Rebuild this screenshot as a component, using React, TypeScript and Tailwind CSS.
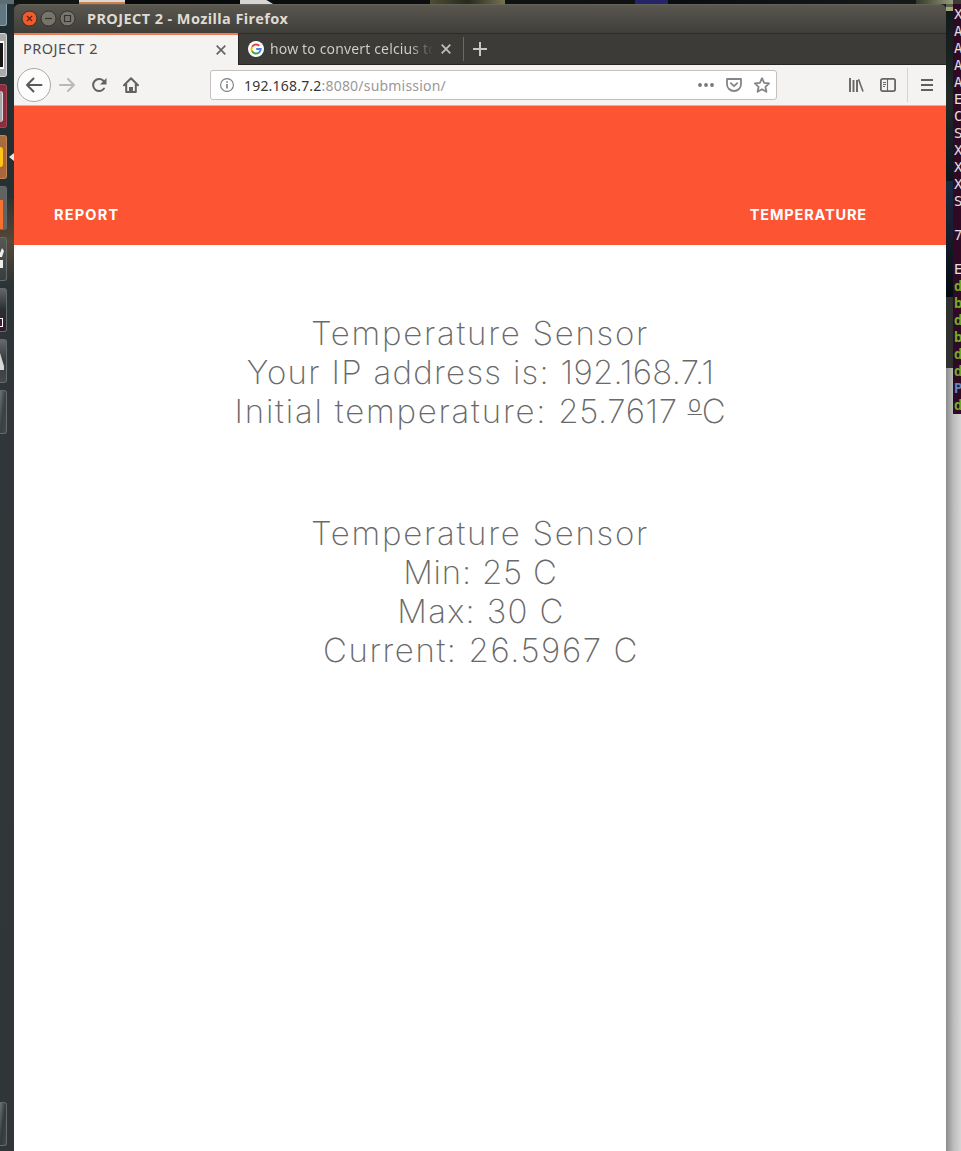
import type { ReactNode } from "react";

const ui = "font-['Noto_Sans','Open_Sans',sans-serif]";

function Wallpaper() {
  return (
    <div className="flex h-1 w-full shrink-0 bg-[#0d0e0f]">
      <div className="w-[14px] bg-[#5d6b73]" />
      <div className="w-[65px] bg-[#111514]" />
      <div className="w-[46px] border-b-2 border-[#d08050] bg-[#ddd8d2]" />
      <div className="w-[115px] bg-[#08090a]" />
      <div className="w-[33px] bg-[#d6d6d4] [clip-path:polygon(0_0,80%_0,100%_100%,0_100%)]" />
      <div className="w-[157px] bg-[#0c0d0e]" />
      <div className="w-[75px] bg-linear-to-r from-[#4d4e32] via-[#272b1e] to-[#76734d]" />
      <div className="w-[85px] bg-[#101112]" />
      <div className="w-[45px] bg-[#101012]" />
      <div className="w-[33px] bg-[#242469]" />
      <div className="w-[248px] bg-linear-to-r from-[#0b0c10] to-[#16191a]" />
      <div className="w-[37px] bg-linear-to-r from-[#34392b] to-[#969b78]" />
      <div className="flex-1 bg-[#3c3b37]" />
    </div>
  );
}

function Tile({ className = "", children }: { className?: string; children?: ReactNode }) {
  return (
    <div
      className={`flex h-11 w-[7px] shrink-0 items-center overflow-hidden rounded-r-[3px] border-y border-r border-[#64696b] ${className}`}
    >
      {children}
    </div>
  );
}

function Dock() {
  return (
    <div className="relative flex w-[14px] shrink-0 flex-col gap-[7px] bg-linear-to-b from-[#1f2c2e] via-[#303639] via-35% to-[#303538]">
      <div className="absolute top-[194px] left-0 h-[88px] w-[14px] bg-linear-to-b from-[#40352b]/30 via-[#6b5037]/70 to-transparent" />
      <div className="h-[22px] w-[7px] shrink-0 rounded-br-[3px] border-r border-b border-[#8fa0a8] bg-[#607681]" />
      <Tile className="relative border-[#d7d7d7] bg-[#aaa]">
        <div className="h-7 w-1 border-y-2 border-r border-white bg-[#171717]" />
      </Tile>
      <Tile className="relative border-[#a64758] bg-[#8b2c40]">
        <div className="h-[31px] w-[3px] rounded-r-sm border-r border-[#ddd] bg-[#a6a6a6]" />
      </Tile>
      <Tile className="relative border-[#c78453] bg-linear-to-b from-[#a96c3d] to-[#a8653f]">
        <div className="h-5 w-[3px] rounded-r-full bg-[#ffc313]" />
      </Tile>
      <Tile className="relative bg-[#626361]">
        <div className="mt-3 h-[29px] w-[3px] bg-[#f67032]" />
      </Tile>
      <Tile className="relative bg-linear-to-b from-[#575854] to-[#383c3d]">
        <svg width="4" height="26" viewBox="0 0 4 26"><path d="M0 7 2 2l2 3-2 6H0ZM0 14h3v8H0Z" fill="#eee" /></svg>
      </Tile>
      <Tile className="relative bg-linear-to-b from-[#62676a] via-[#292e31] to-[#35192b]">
        <div className="mt-6 h-[9px] w-[3px] border border-l-0 border-white bg-[#411c34]" />
      </Tile>
      <Tile className="relative bg-linear-to-b from-[#66696b] via-[#353a3d] to-[#454a4c]">
        <svg width="5" height="26" viewBox="0 0 5 26"><path d="M0 5 4 18v4H0Z" fill="#d7d7d7" /></svg>
      </Tile>
      <Tile className="relative bg-linear-to-br from-[#6f7577] via-[#3b4042] to-[#43494b]" />
      <div className="flex-1" />
      <Tile className="mb-[5px] bg-linear-to-br from-[#6f7577] via-[#34393b] to-[#43494b]" />
      <svg className="absolute top-[149px] left-[9px]" width="5" height="8" viewBox="0 0 5 8">
        <path d="M0 4 5 0v8Z" fill="#e5e5e5" />
      </svg>
    </div>
  );
}

function TitleBar() {
  return (
    <div className="flex h-[29px] shrink-0 items-center rounded-t-md border-t border-[#66635a] bg-linear-to-b from-[#5a574f] to-[#3f3e39] pl-[7px]">
      <svg width="62" height="18" viewBox="0 0 62 18" fill="none">
        <circle cx="8.5" cy="8.5" r="7.5" fill="#ee5b2c" stroke="#33312c" />
        <path d="m6 6 5 5m0-5-5 5" stroke="#55281a" strokeWidth="1.2" />
        <circle cx="27.5" cy="8.5" r="7.5" fill="#77746a" stroke="#33322e" />
        <path d="M24 8.5h7" stroke="#34332f" strokeWidth="1.2" />
        <circle cx="46.5" cy="8.5" r="7.5" fill="#77746a" stroke="#33322e" />
        <path d="M43.5 5.5h6v6h-6Z" stroke="#34332f" strokeWidth="1.2" />
      </svg>
      <span className="ml-1 text-[14.5px] font-bold tracking-[0.42px] whitespace-nowrap text-[#dfdbd2]">
        PROJECT 2 - Mozilla Firefox
      </span>
    </div>
  );
}

function Cross({ color }: { color: string }) {
  return (
    <svg width="10" height="10" viewBox="0 0 10 10" className="shrink-0" fill="none" stroke={color} strokeWidth="1.7">
      <path d="m.7.7 8.6 8.6m0-8.6L.7 9.3" />
    </svg>
  );
}

function Tabs() {
  return (
    <div className="flex h-8 shrink-0 border-t border-[#2d2c28] bg-[#3c3b37]">
      <div className="-mt-px flex h-8 w-56 items-center justify-between border-t-2 border-[#f17c51] bg-[#f4f3f2] pr-3 pb-px pl-[9px]">
        <span className="-mt-[2px] text-[14.5px] tracking-[0.5px] text-[#4c4c4c]">PROJECT 2</span>
        <Cross color="#666" />
      </div>
      <div className="flex flex-1 items-center border-b border-l border-[#262522] pl-[9px]">
        <svg width="16" height="16" viewBox="0 0 16 16" className="shrink-0" fill="none">
          <circle cx="8" cy="8" r="8" fill="#fff" />
          <g strokeWidth="2">
            <path d="M4.1 5.8A4.6 4.6 0 0 1 11.3 4.8" stroke="#ea4335" />
            <path d="M4.1 10.4A4.6 4.6 0 0 1 4.1 5.7" stroke="#fbbc05" />
            <path d="M11 11.5A4.6 4.6 0 0 1 4.1 10.3" stroke="#34a853" />
            <path d="M8.2 8.1h4.5c0 1.5-.6 2.7-1.7 3.5" stroke="#4285f4" />
          </g>
        </svg>
        <span className="-mt-[2px] ml-[6px] w-[165px] overflow-hidden bg-linear-to-r from-[#d4d1ca] from-84% to-transparent to-99% bg-clip-text text-[14px] tracking-[0.15px] whitespace-nowrap text-transparent">
          how to convert celcius to
        </span>
        <span className="ml-[6px]"><Cross color="#c2c0ba" /></span>
        <div className="ml-3 h-6 w-px bg-[#6b6a65]" />
        <svg className="ml-[9px]" width="14" height="14" viewBox="0 0 14 14" stroke="#c9c7c2" strokeWidth="2">
          <path d="M7 0v14M0 7h14" />
        </svg>
      </div>
    </div>
  );
}

function Toolbar() {
  return (
    <div className="flex h-[41px] shrink-0 items-center border-b border-[#c1bbb8] bg-[#f4f3f2]">
      <svg className="ml-[3px] shrink-0" width="34" height="34" viewBox="0 0 34 34" fill="none">
        <circle cx="17" cy="17" r="16.5" fill="#fcfcfc" stroke="#aaa9a8" />
        <path d="M24.5 17H10m6.5-6.5L10 17l6.5 6.5" stroke="#5a5a5a" strokeWidth="2" strokeLinecap="round" strokeLinejoin="round" />
      </svg>
      <svg className="ml-2 shrink-0" width="16" height="16" viewBox="0 0 16 16" fill="none" stroke="#bbb9b7" strokeWidth="2" strokeLinecap="round" strokeLinejoin="round">
        <path d="M1 8h14M9 2l6 6-6 6" />
      </svg>
      <svg className="ml-4 shrink-0" width="16" height="16" viewBox="0 0 16 16" fill="none">
        <path d="M13 11.5A6 6 0 1 1 12.4 3.8L14 5.5" stroke="#626262" strokeWidth="2" strokeLinecap="round" />
        <path d="M15.5 1v6.5H9Z" fill="#626262" />
      </svg>
      <svg className="ml-4 shrink-0" width="16" height="16" viewBox="0 0 16 16" fill="none">
        <path d="m1 8.2 7-7 7 7M3.2 7v8h9.6V7" stroke="#626262" strokeWidth="2" strokeLinecap="round" strokeLinejoin="round" />
        <path d="M6 15v-5h4v5Z" fill="#626262" />
      </svg>
      <div className="ml-[71px] flex h-[30px] w-[567px] shrink-0 items-center rounded-[3px] border border-[#c5c0bd] bg-white pl-[9px]">
        <svg width="14" height="14" viewBox="0 0 14 14" fill="none" stroke="#7c7c7c">
          <circle cx="7" cy="7" r="6.4" strokeWidth="1.1" />
          <path d="M7 6v4.5M7 3.2v1.6" strokeWidth="1.6" />
        </svg>
        <span className="ml-[10px] text-[14px] tracking-[0.2px] whitespace-nowrap text-[#999]">
          <span className="text-[#383838]">192.168.7.2</span>:8080/submission/
        </span>
        <svg className="ml-auto" width="16" height="4" viewBox="0 0 16 4" fill="#777">
          <circle cx="2" cy="2" r="1.9" /><circle cx="8" cy="2" r="1.9" /><circle cx="14" cy="2" r="1.9" />
        </svg>
        <svg className="ml-3" width="16" height="14" viewBox="0 0 16 14" fill="none" stroke="#858585" strokeLinejoin="round" strokeLinecap="round">
          <path d="M1 1h14v5.2a7 6.8 0 0 1-14 0Z" strokeWidth="1.8" />
          <path d="m4.8 5.1 3.2 3.1 3.2-3.1" strokeWidth="1.8" />
        </svg>
        <svg className="mr-[6px] ml-3" width="16" height="16" viewBox="0 0 16 16" fill="none" stroke="#858585" strokeWidth="1.8" strokeLinejoin="round">
          <path d="m8 1.2 2.1 4.6 5 .6-3.7 3.4 1 5L8 12.3l-4.4 2.5 1-5L.9 6.4l5-.6Z" />
        </svg>
      </div>
      <svg className="ml-[71px]" width="16" height="14" viewBox="0 0 16 14" fill="none" stroke="#666" strokeWidth="2">
        <path d="M2 0v14M5.5 2v12M9 2v12" strokeWidth="1.9" /><path d="m10.5 1.3 4.5 12.2" strokeWidth="1.6" />
      </svg>
      <svg className="ml-4" width="16" height="14" viewBox="0 0 16 14" fill="none" stroke="#666">
        <rect x=".9" y=".9" width="14.2" height="12.2" rx="1.8" strokeWidth="1.8" />
        <path d="M7.5 1v12M3 4.5h3M3 6.5h3M3 8.5h2" strokeWidth="1.1" />
      </svg>
      <div className="ml-[11px] h-[34px] w-px bg-[#d6d4d2]" />
      <svg className="ml-[13px]" width="12" height="12" viewBox="0 0 12 12" stroke="#606060" strokeWidth="2">
        <path d="M0 1h12M0 6h12M0 11h12" />
      </svg>
    </div>
  );
}

function Page() {
  return (
    <main className="flex flex-1 flex-col bg-white font-['Inter',sans-serif]">
      <header className="flex h-[139px] items-end justify-between bg-[#fd5533] pr-[79px] pb-5 pl-10 text-[14.5px] leading-5 font-bold text-white">
        <span className="tracking-[1.2px]">REPORT</span>
        <span className="tracking-[0.85px]">TEMPERATURE</span>
      </header>
      <section className="mt-[69px] flex flex-col items-center text-[33px] leading-[39px] font-[250] whitespace-nowrap text-[#696969]">
        <p className="tracking-[1.75px]">Temperature Sensor</p>
        <p className="pl-px tracking-[1.3px]">Your IP address is: <span className="tracking-[0.25px]">192.168.7.1</span></p>
        <p className="pl-px tracking-[1.78px]">
          Initial temperature: <span className="tracking-[0.65px]">25.7617 <span className="underline decoration-1 [text-underline-offset:-9px] [text-decoration-skip-ink:none]">º</span>C</span>
        </p>
      </section>
      <section className="mt-[83px] flex flex-col items-center text-[33px] leading-[39px] font-[250] whitespace-nowrap text-[#696969]">
        <p className="tracking-[1.75px]">Temperature Sensor</p>
        <p className="pl-px tracking-[0.8px]">Min: 25 C</p>
        <p className="pl-[2px] tracking-[1.35px]">Max: 30 C</p>
        <p className="pl-[2px] tracking-[1.6px]">Current: 26.5967 C</p>
      </section>
    </main>
  );
}

const terminal = ["X", "A", "A", "A", "A", "E", "C", "S", "X", "X", "X", "S", "", "7", "", "E", "d", "b", "d", "b", "d", "d", "P", "d"];

function RightEdge() {
  return (
    <div className="flex w-[15px] shrink-0 bg-linear-to-r from-[#8b8b8b] via-[#bdbdbd] to-[#d5d5d5]">
      <div className="flex w-[7px] flex-col">
        <div className="h-[3px] bg-[#59604b]" />
        <div className="h-1 bg-[#a2a579]" />
        <div className="h-[170px] bg-linear-to-b from-[#11191b] via-[#222a25] to-[#0b151e]" />
        <div className="h-[116px] bg-linear-to-b from-[#142a40] via-[#161b2b] to-[#060a12]" />
        <div className="h-[71px] bg-[#30312e]" />
      </div>
      <div className="h-[410px] w-2 overflow-hidden bg-[#300a24] pt-[2px] pl-px font-['DejaVu_Sans_Mono',monospace] text-[14px] leading-[17px]">
        {terminal.map((c, i) => (
          <div key={i} className={`h-[17px] ${i === 22 ? "font-bold text-[#5f87bf]" : i > 15 ? "font-bold text-[#70ad26]" : "text-[#e0e0e0]"}`}>
            {c}
          </div>
        ))}
      </div>
    </div>
  );
}

export default function App() {
  return (
    <div className={`flex h-[1151px] w-[961px] flex-col overflow-hidden ${ui}`}>
      <Wallpaper />
      <div className="flex min-h-0 flex-1 bg-[#171b1b]">
        <Dock />
        <div className="flex w-[932px] shrink-0 flex-col">
          <TitleBar />
          <Tabs />
          <Toolbar />
          <Page />
        </div>
        <RightEdge />
      </div>
    </div>
  );
}
